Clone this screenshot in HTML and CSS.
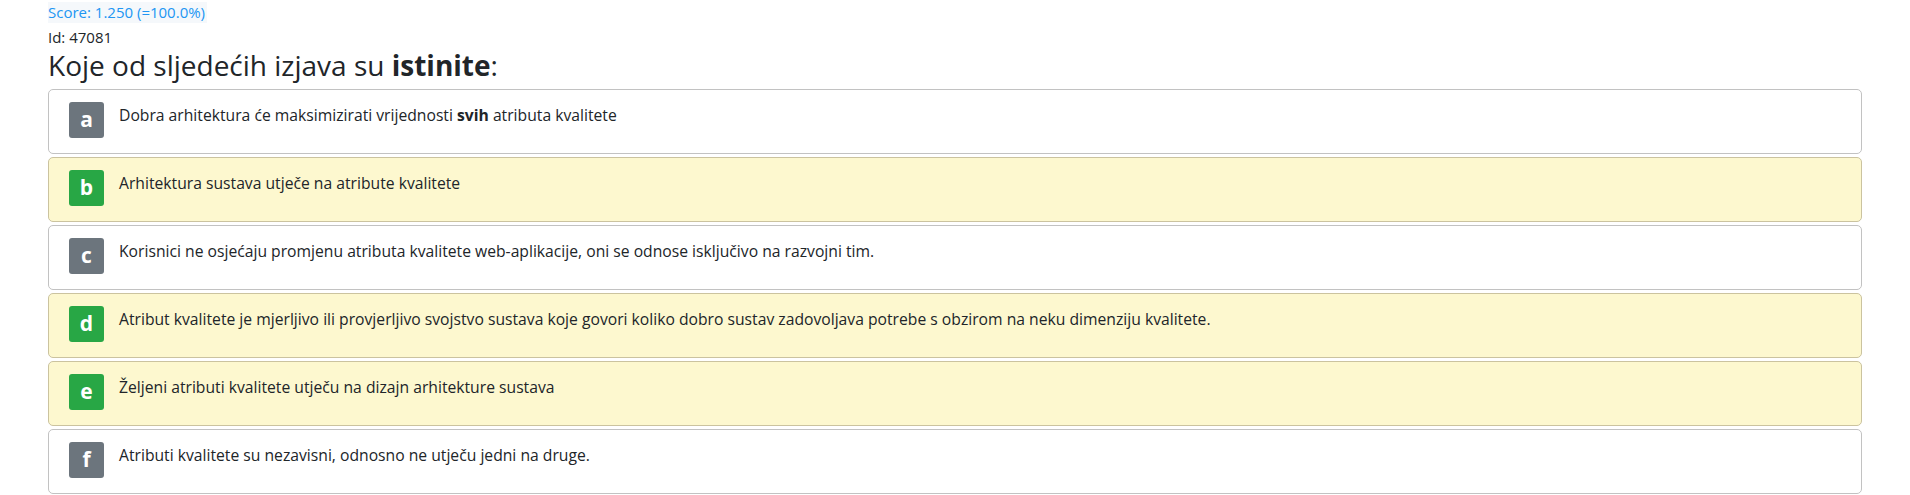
FILE: index.html
```html
<!DOCTYPE html>
<html lang="hr">
<head>
<meta charset="utf-8">
<title>Pitanje 47081</title>
<link rel="stylesheet" href="styles.css">
</head>
<body>
<main class="page">
  <div class="score">Score: 1.250 (=100.0%)</div>
  <div class="qid">Id: 47081</div>
  <h1 class="question">Koje od sljedećih izjava su <b>istinite</b>:</h1>
  <ul class="answers">
    <li class="answer">
      <span class="badge badge-gray">a</span>
      <span class="answer-text">Dobra arhitektura će maksimizirati vrijednosti <b>svih</b> atributa kvalitete</span>
    </li>
    <li class="answer answer-correct">
      <span class="badge badge-green">b</span>
      <span class="answer-text">Arhitektura sustava utječe na atribute kvalitete</span>
    </li>
    <li class="answer">
      <span class="badge badge-gray">c</span>
      <span class="answer-text">Korisnici ne osjećaju promjenu atributa kvalitete web-aplikacije, oni se odnose isključivo na razvojni tim.</span>
    </li>
    <li class="answer answer-correct">
      <span class="badge badge-green">d</span>
      <span class="answer-text">Atribut kvalitete je mjerljivo ili provjerljivo svojstvo sustava koje govori koliko dobro sustav zadovoljava potrebe s obzirom na neku dimenziju kvalitete.</span>
    </li>
    <li class="answer answer-correct">
      <span class="badge badge-green">e</span>
      <span class="answer-text">Željeni atributi kvalitete utječu na dizajn arhitekture sustava</span>
    </li>
    <li class="answer">
      <span class="badge badge-gray">f</span>
      <span class="answer-text">Atributi kvalitete su nezavisni, odnosno ne utječu jedni na druge.</span>
    </li>
  </ul>
</main>
</body>
</html>
```
FILE: styles.css
```css
html, body {
  margin: 0;
  padding: 0;
  background: #ffffff;
}

body {
  font-family: "Open Sans", "Noto Sans", sans-serif;
  font-size: 16px;
  line-height: 24px;
  color: #212529;
}

.page {
  padding: 0 48px;
}

.score {
  display: inline-block;
  color: #2196f3;
  background: #f5f8fb;
  font-size: 15px;
  line-height: 21px;
  padding-right: 2px;
}

.qid {
  font-size: 15px;
  line-height: 22px;
  margin-top: 2px;
}

.question {
  margin: 0 0 7px 0;
  font-size: 28px;
  line-height: 34px;
  font-weight: 400;
}

.question b {
  font-weight: 700;
}

.answers {
  list-style: none;
  margin: 0;
  padding: 0;
  display: flex;
  flex-direction: column;
  gap: 3px;
}

.answer {
  display: flex;
  align-items: flex-start;
  gap: 15px;
  min-height: 36px;
  padding: 12px 20px 15px 20px;
  border: 1px solid #c2c2c2;
  border-radius: 5px;
  background: #ffffff;
}

.answer-correct {
  background: #fdf8cf;
  border-color: #cbc39f;
}

.badge {
  flex: 0 0 35px;
  width: 35px;
  height: 36px;
  border-radius: 3px;
  color: #ffffff;
  font-weight: 700;
  font-size: 21px;
  line-height: 34px;
  text-align: center;
}

.badge-gray {
  background: #6c757d;
}

.badge-green {
  background: #28a745;
}

.answer-text {
  font-size: 15.7px;
  line-height: 24px;
  padding-top: 1px;
}

.answer-text b {
  font-weight: 700;
}
```
